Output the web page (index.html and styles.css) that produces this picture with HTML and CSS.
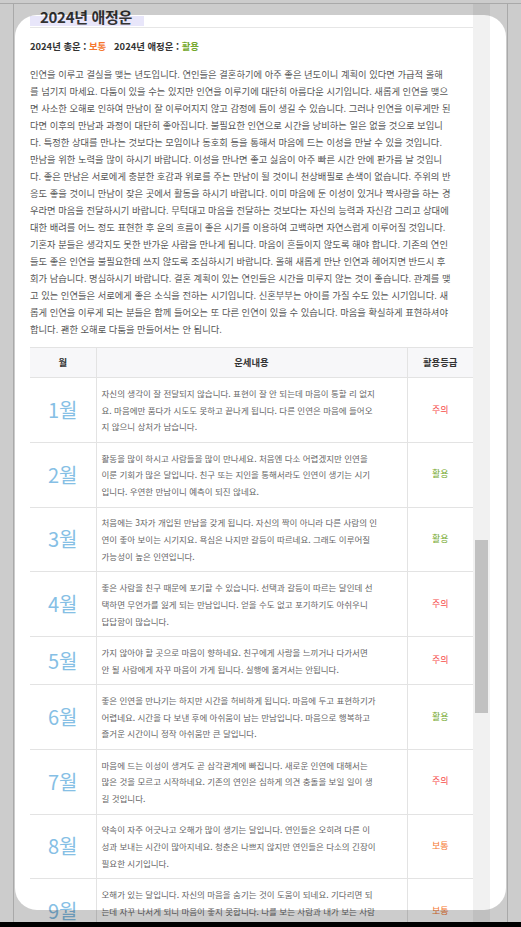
FILE: index.html
```html
<!DOCTYPE html>
<html lang="ko">
<head>
<meta charset="utf-8">
<title>2024년 애정운</title>
<link rel="stylesheet" href="styles.css">
</head>
<body>
<div class="page">
  <div class="topline">
    <div class="frame">
      <div class="scroller">
        <div class="content">
          <div class="title-bar"><h2 class="title">2024년 애정운</h2></div>
          <p class="summary">2024년 총운 : <span class="g-normal">보통</span>&nbsp;&nbsp; 2024년 애정운 : <span class="g-good">활용</span></p>
          <p class="desc">
            <span class="ln">인연을 이루고 결실을 맺는 년도입니다. 연인들은 결혼하기에 아주 좋은 년도이니 계획이 있다면 가급적 올해</span>
            <span class="ln">를 넘기지 마세요. 다툼이 있을 수는 있지만 인연을 이루기에 대단히 아름다운 시기입니다. 새롭게 인연을 맺으</span>
            <span class="ln">면 사소한 오해로 인하여 만남이 잘 이루어지지 않고 감정에 틈이 생길 수 있습니다. 그러나 인연을 이루게만 된</span>
            <span class="ln">다면 이후의 만남과 과정이 대단히 좋아집니다. 불필요한 인연으로 시간을 낭비하는 일은 없을 것으로 보입니</span>
            <span class="ln">다. 특정한 상대를 만나는 것보다는 모임이나 동호회 등을 통해서 마음에 드는 이성을 만날 수 있을 것입니다.</span>
            <span class="ln">만남을 위한 노력을 많이 하시기 바랍니다. 이성을 만나면 좋고 싫음이 아주 빠른 시간 안에 판가름 날 것입니</span>
            <span class="ln">다. 좋은 만남은 서로에게 충분한 호감과 위로를 주는 만남이 될 것이니 천상배필로 손색이 없습니다. 주위의 반</span>
            <span class="ln">응도 좋을 것이니 만남이 잦은 곳에서 활동을 하시기 바랍니다. 이미 마음에 둔 이성이 있거나 짝사랑을 하는 경</span>
            <span class="ln">우라면 마음을 전달하시기 바랍니다. 무턱대고 마음을 전달하는 것보다는 자신의 능력과 자신감 그리고 상대에</span>
            <span class="ln">대한 배려를 어느 정도 표현한 후 운의 흐름이 좋은 시기를 이용하여 고백하면 자연스럽게 이루어질 것입니다.</span>
            <span class="ln">기혼자 분들은 생각지도 못한 반가운 사람을 만나게 됩니다. 마음이 흔들이지 않도록 해야 합니다. 기존의 연인</span>
            <span class="ln">들도 좋은 인연을 불필요한데 쓰지 않도록 조심하시기 바랍니다. 올해 새롭게 만난 인연과 헤어지면 반드시 후</span>
            <span class="ln">회가 남습니다. 명심하시기 바랍니다. 결혼 계획이 있는 연인들은 시간을 미루지 않는 것이 좋습니다. 관계를 맺</span>
            <span class="ln">고 있는 인연들은 서로에게 좋은 소식을 전하는 시기입니다. 신혼부부는 아이를 가질 수도 있는 시기입니다. 새</span>
            <span class="ln">롭게 인연을 이루게 되는 분들은 함께 들어오는 또 다른 인연이 있을 수 있습니다. 마음을 확실하게 표현하셔야</span>
            <span class="ln">합니다. 괜한 오해로 다툼을 만들어서는 안 됩니다.</span>
          </p>
          <table class="months">
            <colgroup><col class="c-month"><col class="c-text"><col class="c-grade"></colgroup>
            <thead>
              <tr><th>월</th><th>운세내용</th><th>활용등급</th></tr>
            </thead>
            <tbody>
              <tr><td class="m">1월</td><td class="t"><span class="ln">자신의 생각이 잘 전달되지 않습니다. 표현이 잘 안 되는데 마음이 통할 리 없지</span><span class="ln">요. 마음에만 품다가 시도도 못하고 끝나게 됩니다. 다른 인연은 마음에 들어오</span><span class="ln">지 않으니 상처가 남습니다.</span></td><td class="g g-warn">주의</td></tr>
              <tr><td class="m">2월</td><td class="t"><span class="ln">활동을 많이 하시고 사람들을 많이 만나세요. 처음엔 다소 어렵겠지만 인연을</span><span class="ln">이룬 기회가 많은 달입니다. 친구 또는 지인을 통해서라도 인연이 생기는 시기</span><span class="ln">입니다. 우연한 만남이니 예측이 되진 않네요.</span></td><td class="g g-good">활용</td></tr>
              <tr><td class="m">3월</td><td class="t"><span class="ln">처음에는 3자가 개입된 만남을 갖게 됩니다. 자신의 짝이 아니라 다른 사람의 인</span><span class="ln">연이 좋아 보이는 시기지요. 욕심은 나지만 갈등이 따르네요. 그래도 이루어질</span><span class="ln">가능성이 높은 인연입니다.</span></td><td class="g g-good">활용</td></tr>
              <tr><td class="m">4월</td><td class="t"><span class="ln">좋은 사람을 친구 때문에 포기할 수 있습니다. 선택과 갈등이 따르는 달인데 선</span><span class="ln">택하면 무언가를 잃게 되는 만남입니다. 얻을 수도 없고 포기하기도 아쉬우니</span><span class="ln">답답함이 많습니다.</span></td><td class="g g-warn">주의</td></tr>
              <tr><td class="m">5월</td><td class="t"><span class="ln">가지 않아야 할 곳으로 마음이 향하네요. 친구에게 사랑을 느끼거나 다가서면</span><span class="ln">안 될 사람에게 자꾸 마음이 가게 됩니다. 실행에 옮겨서는 안됩니다.</span></td><td class="g g-warn">주의</td></tr>
              <tr><td class="m">6월</td><td class="t"><span class="ln">좋은 인연을 만나기는 하지만 시간을 허비하게 됩니다. 마음에 두고 표현하기가</span><span class="ln">어렵네요. 시간을 다 보낸 후에 아쉬움이 남는 만남입니다. 마음으로 행복하고</span><span class="ln">즐거운 시간이니 정작 아쉬움만 큰 달입니다.</span></td><td class="g g-good">활용</td></tr>
              <tr><td class="m">7월</td><td class="t"><span class="ln">마음에 드는 이성이 생겨도 곧 삼각관계에 빠집니다. 새로운 인연에 대해서는</span><span class="ln">많은 것을 모르고 시작하네요. 기존의 연인은 심하게 의견 충돌을 보일 일이 생</span><span class="ln">길 것입니다.</span></td><td class="g g-warn">주의</td></tr>
              <tr><td class="m">8월</td><td class="t"><span class="ln">약속이 자주 어긋나고 오해가 많이 생기는 달입니다. 연인들은 오히려 다른 이</span><span class="ln">성과 보내는 시간이 많아지네요. 청춘은 나쁘지 않지만 연인들은 다소의 긴장이</span><span class="ln">필요한 시기입니다.</span></td><td class="g g-normal">보통</td></tr>
              <tr><td class="m">9월</td><td class="t"><span class="ln">오해가 있는 달입니다. 자신의 마음을 숨기는 것이 도움이 되네요. 기다리면 되</span><span class="ln">는데 자꾸 나서게 되니 마음이 좋지 못합니다. 나를 보는 사람과 내가 보는 사람</span><span class="ln">이 다르니 서두르지 마세요.</span></td><td class="g g-normal">보통</td></tr>
            </tbody>
          </table>
        </div>
      </div>
      <div class="track"><div class="thumb"></div></div>
      <div class="gutter"></div>
    </div>
  </div>
</div>
<div class="spotlight"></div>
</body>
</html>
```

FILE: styles.css
```css
html, body {
  margin: 0;
  padding: 0;
  background: #000;
  height: 927px;
  overflow: hidden;
  font-family: "Noto Sans CJK KR", "Noto Sans", sans-serif;
}

.page {
  position: relative;
  height: 922px;
  background: #fff;
  padding-top: 3px;
  box-sizing: border-box;
  overflow: hidden;
}

.topline {
  border-top: 1px solid #d4d4d4;
  height: 919px;
  box-sizing: border-box;
}

.frame {
  margin-left: 13px;
  width: 495px;
  height: 918px;
  box-sizing: border-box;
  border-left: 1px solid #d4d4d4;
  border-right: 1px solid #d4d4d4;
  display: flex;
  overflow: hidden;
}

.scroller {
  width: 459px;
  flex: none;
  overflow: hidden;
}

.content {
  padding-left: 16px;
}

.title-bar {
  padding-bottom: 4px;
  border-bottom: 1px solid #e6e6e6;
  height: 19px;
}

.title {
  display: inline-block;
  margin: 0;
  padding: 0 12px 0 10px;
  font-size: 15px;
  font-weight: 700;
  line-height: 19px;
  color: #333;
  letter-spacing: -0.3px;
  background: linear-gradient(to bottom, transparent 9px, #e8e6fa 9px);
}

.summary {
  margin: 11px 0 0;
  font-size: 9.4px;
  line-height: 14px;
  font-weight: 700;
  color: #333;
}

.g-normal { color: #f5772f; }
.g-good { color: #74a82c; }
.g-warn { color: #f64a4a; }

.desc {
  margin: 13px 0 0;
  font-size: 9.3px;
  line-height: 17px;
  color: #555;
}

.ln {
  display: block;
  white-space: nowrap;
}

.months {
  margin-top: 9px;
  width: 443px;
  border-collapse: collapse;
  table-layout: fixed;
  border-top: 1px solid #e3e3e3;
}

.c-month { width: 66px; }
.c-text { width: 311px; }
.c-grade { width: 66px; }

.months th {
  background: #f7f7f9;
  font-size: 9.4px;
  font-weight: 700;
  color: #333;
  line-height: 17px;
  padding: 6px 4px;
  border-bottom: 1px solid #e3e3e3;
  text-align: center;
}

.months th + th,
.months td + td {
  border-left: 1px solid #e3e3e3;
}

.months td {
  border-bottom: 1px solid #e3e3e3;
  vertical-align: middle;
  padding: 6.75px 5px;
  line-height: 16.75px;
}

.months td.m {
  text-align: center;
  font-size: 20px;
  line-height: 20px;
  color: #86bfe5;
  padding: 0;
}

.months td.t {
  font-size: 8.5px;
  color: #666;
}

.months td.g {
  text-align: center;
  font-size: 9px;
}

.track {
  width: 17px;
  flex: none;
  background: #f1f1f1;
  padding-top: 536px;
  box-sizing: border-box;
}

.thumb {
  height: 173px;
  margin: 0 2px;
  background: #c1c1c1;
}

.gutter {
  flex: 1;
  background: #fff;
}

.spotlight {
  position: absolute;
  left: 15px;
  top: 15px;
  width: 491px;
  height: 895px;
  border-radius: 22px;
  box-shadow: 0 0 0 1400px rgba(0, 0, 0, 0.2);
  pointer-events: none;
}
```
